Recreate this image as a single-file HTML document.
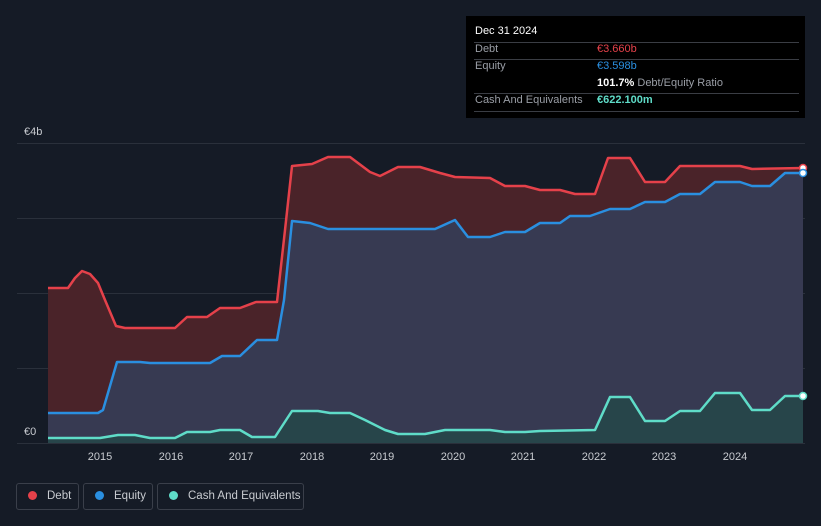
<!DOCTYPE html>
<html><head><meta charset="utf-8"><style>
body{margin:0;background:#151b26;font-family:"Liberation Sans",sans-serif;overflow:hidden;}
.tt{position:absolute;left:466px;top:16px;width:339px;height:102px;background:#000;}
.tt div{position:absolute;font-size:11px;color:#9a9ea6;white-space:nowrap;}
.ln{position:absolute;left:8px;width:325px;height:1px;background:#3a3d44;}
.lg{position:absolute;top:483px;height:27px;border:1px solid #3a3f4a;border-radius:3px;box-sizing:border-box;color:#c8cbd0;font-size:11.5px;line-height:25px;white-space:nowrap;overflow:hidden;}
.lg span{display:inline-block;width:9px;height:9px;border-radius:50%;margin:0 10px 0 11px;vertical-align:-1px;}
</style></head><body>
<svg width="821" height="526" style="position:absolute;left:0;top:0">
<g stroke="#2a303b" stroke-width="1">
<line x1="17" y1="143.5" x2="805" y2="143.5"/><line x1="17" y1="218.5" x2="805" y2="218.5"/>
<line x1="17" y1="293.5" x2="805" y2="293.5"/><line x1="17" y1="368.5" x2="805" y2="368.5"/>
<line x1="17" y1="443.5" x2="805" y2="443.5"/></g>
<polygon fill="#4a2329" points="48,443 48,288 68,288 75,278 82,271 90,274 98,283 105,300 116,326 125,328 175,328 187,317 207,317 220,308 240,308 256,302 277,302 285,230 292,166 312,164 328,157 350,157 370,172 380,176 398,167 420,167 440,173 455,177 490,178 505,186 525,186 540,190 560,190 575,194 595,194 608,158 630,158 645,182 665,182 680,166 740,166 752,169 803,168 803,443"/>
<polygon fill="#373a52" points="48,443 48,413 98,413 103,410 117,362 140,362 150,363 210,363 222,356 240,356 257,340 277,340 284,300 292,221 310,223 328,229 435,229 455,220 468,237 490,237 505,232 525,232 540,223 560,223 570,216 590,216 610,209 630,209 645,202 665,202 680,194 700,194 715,182 740,182 752,186 770,186 785,173 803,173 803,443"/>
<polygon fill="#27454a" points="48,443 48,438 100,438 118,435 135,435 150,438 175,438 187,432 210,432 220,430 240,430 252,437 275,437 292,411 318,411 330,413 350,413 365,420 385,430 398,434 425,434 445,430 490,430 505,432 525,432 540,431 595,430 610,397 630,397 645,421 665,421 680,411 700,411 715,393 740,393 752,410 770,410 785,396 803,396 803,443"/>
<g fill="none" stroke-width="2.5" stroke-linejoin="round">
<polyline stroke="#e5414a" points="48,288 68,288 75,278 82,271 90,274 98,283 105,300 116,326 125,328 175,328 187,317 207,317 220,308 240,308 256,302 277,302 285,230 292,166 312,164 328,157 350,157 370,172 380,176 398,167 420,167 440,173 455,177 490,178 505,186 525,186 540,190 560,190 575,194 595,194 608,158 630,158 645,182 665,182 680,166 740,166 752,169 803,168"/>
<polyline stroke="#2a8fe0" points="48,413 98,413 103,410 117,362 140,362 150,363 210,363 222,356 240,356 257,340 277,340 284,300 292,221 310,223 328,229 435,229 455,220 468,237 490,237 505,232 525,232 540,223 560,223 570,216 590,216 610,209 630,209 645,202 665,202 680,194 700,194 715,182 740,182 752,186 770,186 785,173 803,173"/>
<polyline stroke="#5fdcc8" points="48,438 100,438 118,435 135,435 150,438 175,438 187,432 210,432 220,430 240,430 252,437 275,437 292,411 318,411 330,413 350,413 365,420 385,430 398,434 425,434 445,430 490,430 505,432 525,432 540,431 595,430 610,397 630,397 645,421 665,421 680,411 700,411 715,393 740,393 752,410 770,410 785,396 803,396"/>
</g>
<circle cx="803" cy="168" r="3.5" fill="#fff" stroke="#e5414a" stroke-width="1.5"/>
<circle cx="803" cy="173" r="3.5" fill="#fff" stroke="#2a8fe0" stroke-width="1.5"/>
<circle cx="803" cy="396" r="3.5" fill="#fff" stroke="#5fdcc8" stroke-width="1.5"/>
<g fill="#c8cbd0" font-size="11" font-family="Liberation Sans,sans-serif">
<text x="24" y="135">€4b</text><text x="24" y="435">€0</text>
<g text-anchor="middle"><text x="100" y="460">2015</text><text x="171" y="460">2016</text><text x="241" y="460">2017</text><text x="312" y="460">2018</text><text x="382" y="460">2019</text><text x="453" y="460">2020</text><text x="523" y="460">2021</text><text x="594" y="460">2022</text><text x="664" y="460">2023</text><text x="735" y="460">2024</text></g>
</g></svg>
<div class="tt">
<div style="left:9px;top:9px;color:#fff;">Dec 31 2024</div>
<div class="ln" style="top:26px"></div>
<div style="left:9px;top:27px">Debt</div><div style="left:131px;top:27px;color:#e5414a">€3.660b</div>
<div class="ln" style="top:43px"></div>
<div style="left:9px;top:44px">Equity</div><div style="left:131px;top:44px;color:#2a8fe0">€3.598b</div>
<div style="left:131px;top:61px"><b style="color:#fff">101.7%</b> Debt/Equity Ratio</div>
<div class="ln" style="top:77px"></div>
<div style="left:9px;top:78px">Cash And Equivalents</div><div style="left:131px;top:78px;color:#5fdcc8;font-weight:bold">€622.100m</div>
<div class="ln" style="top:95px"></div>
</div>
<div class="lg" style="left:16px;width:63px"><span style="background:#e5414a"></span>Debt</div>
<div class="lg" style="left:83px;width:70px"><span style="background:#2a8fe0"></span>Equity</div>
<div class="lg" style="left:157px;width:147px"><span style="background:#5fdcc8"></span>Cash And Equivalents</div>
</body></html>
